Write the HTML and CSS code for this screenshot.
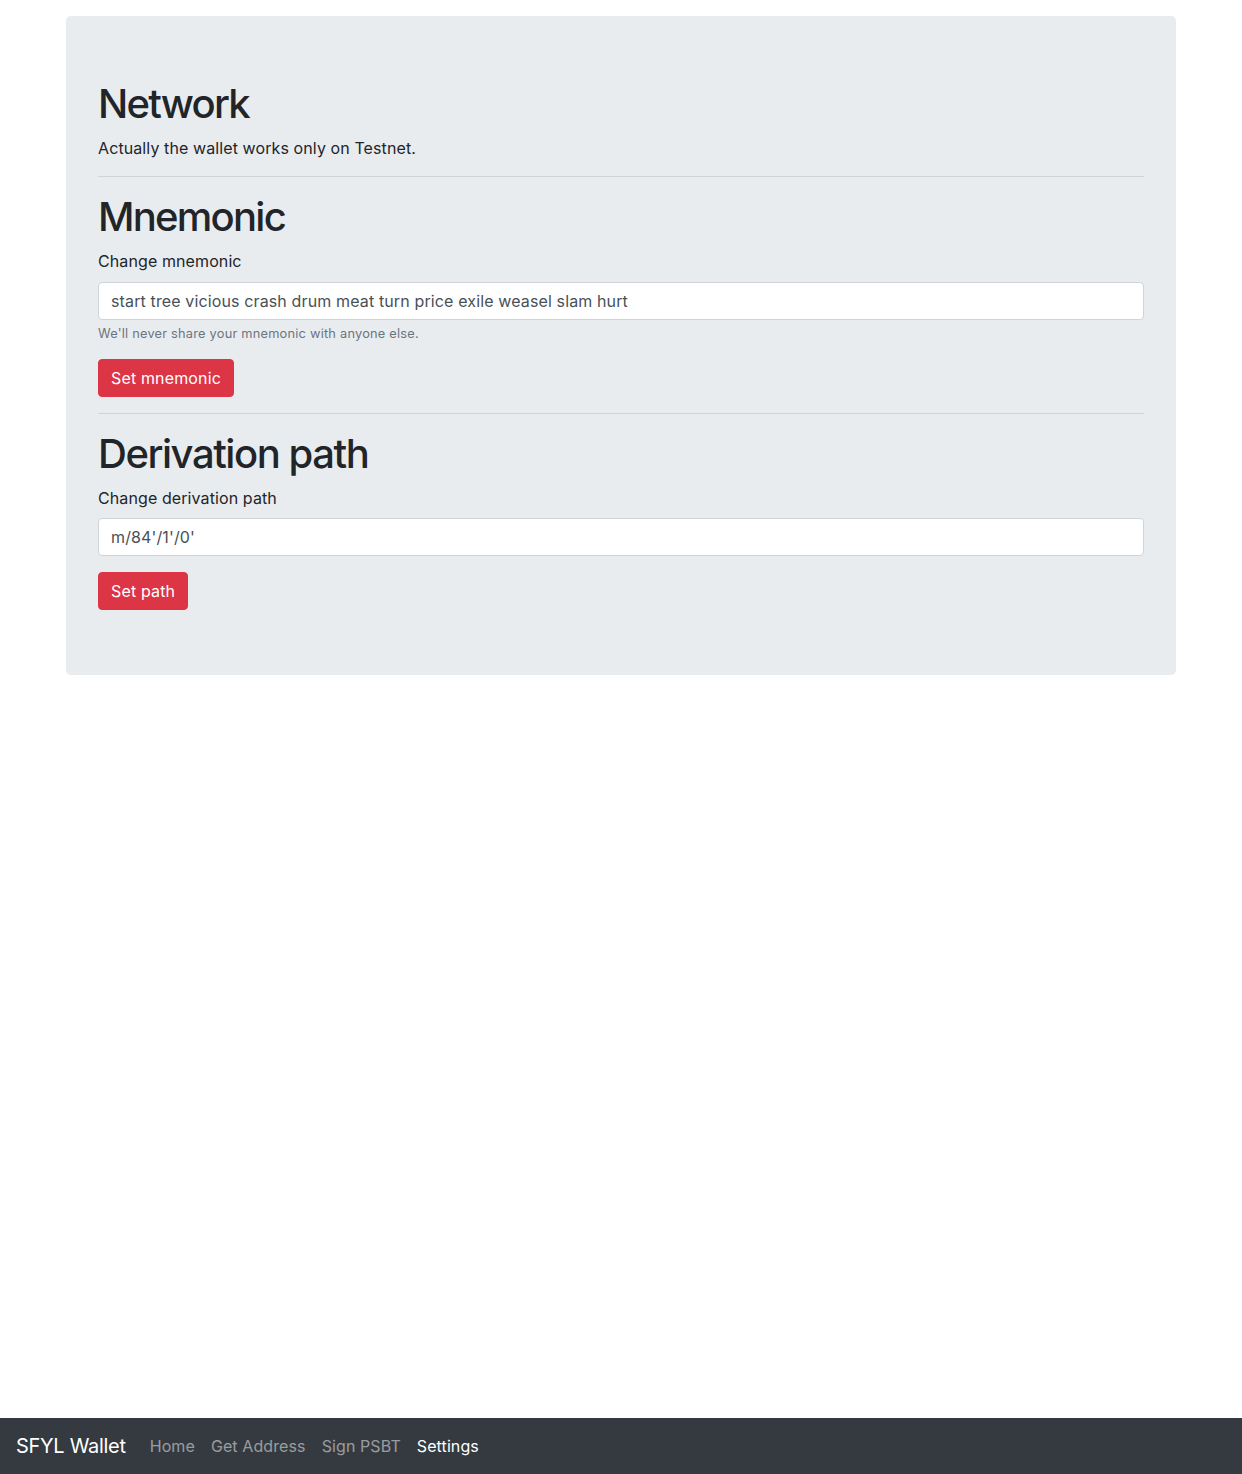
FILE: index.html
```
<!DOCTYPE html>
<html lang="en">
<head>
<meta charset="utf-8">
<title>SFYL Wallet</title>
<link rel="stylesheet" href="styles.css">
</head>
<body>
<div class="container">
  <div class="jumbotron">
    <h1 class="title">Network</h1>
    <p class="text">Actually the wallet works only on Testnet.</p>
    <hr class="divider">
    <h1 class="title">Mnemonic</h1>
    <form class="form">
      <div class="form-group">
        <label class="label" for="mnemonic">Change mnemonic</label>
        <input class="input" id="mnemonic" type="text" value="start tree vicious crash drum meat turn price exile weasel slam hurt">
        <small class="help">We'll never share your mnemonic with anyone else.</small>
      </div>
      <button class="btn" type="button">Set mnemonic</button>
    </form>
    <hr class="divider">
    <h1 class="title wide">Derivation path</h1>
    <form class="form">
      <div class="form-group">
        <label class="label" for="path">Change derivation path</label>
        <input class="input" id="path" type="text" value="m/84'/1'/0'">
      </div>
      <button class="btn" type="button">Set path</button>
    </form>
  </div>
</div>
<nav class="navbar">
  <span class="brand">SFYL Wallet</span>
  <ul class="nav">
    <li><a class="nav-link" href="#">Home</a></li>
    <li><a class="nav-link" href="#">Get Address</a></li>
    <li><a class="nav-link" href="#">Sign PSBT</a></li>
    <li><a class="nav-link active" href="#">Settings</a></li>
  </ul>
</nav>
</body>
</html>
```
FILE: styles.css
```
* { box-sizing: border-box; }
html, body { margin: 0; padding: 0; }
body {
  font-family: Inter, "Liberation Sans", sans-serif;
  font-size: 16px;
  line-height: 1.5;
  letter-spacing: 0.1px;
  color: #212529;
  background: #fff;
}
.container {
  width: 1110px;
  margin: 16px auto 0;
}
.jumbotron {
  background: #e9ecef;
  border-radius: 4.8px;
  padding: 64px 32px 65px;
}
.title {
  font-size: 40px;
  font-weight: 500;
  line-height: 1.2;
  margin: 0 0 8px;
  letter-spacing: -1.75px;
}
.title.wide { letter-spacing: -1.45px; }
.text { margin: 0 0 16px; }
.divider {
  border: 0;
  border-top: 1px solid rgba(0,0,0,.1);
  margin: 16px 0;
  height: 0;
}
.form { margin: 0; }
.form-group { margin-bottom: 16px; }
.label { display: inline-block; margin-bottom: 8.5px; }
.input {
  display: block;
  width: 100%;
  height: 38px;
  padding: 6px 12px;
  font: inherit;
  font-size: 16px;
  line-height: 1.5;
  letter-spacing: 0.13px;
  color: #495057;
  background: #fff;
  border: 1px solid #ced4da;
  border-radius: 4px;
}
.help {
  display: block;
  margin-top: 4px;
  font-size: 12.8px;
  letter-spacing: 0.22px;
  color: #6c757d;
}
.btn {
  display: inline-block;
  font: inherit;
  font-size: 16px;
  line-height: 1.5;
  letter-spacing: 0.15px;
  padding: 6px 12px;
  color: #fff;
  background: #dc3545;
  border: 1px solid #dc3545;
  border-radius: 4px;
}
.navbar {
  position: fixed;
  left: 0; right: 0; bottom: 0;
  height: 56px;
  background: #343a40;
  display: flex;
  align-items: center;
  padding: 8px 16px;
}
.brand {
  font-size: 20px;
  line-height: 30px;
  letter-spacing: -0.3px;
  color: #fff;
  margin-right: 16px;
}
.nav {
  list-style: none;
  margin: 0; padding: 0;
  display: flex;
}
.nav-link {
  display: block;
  padding: 8px;
  color: rgba(255,255,255,.5);
  text-decoration: none;
}
.nav-link.active { color: #fff; }
```
